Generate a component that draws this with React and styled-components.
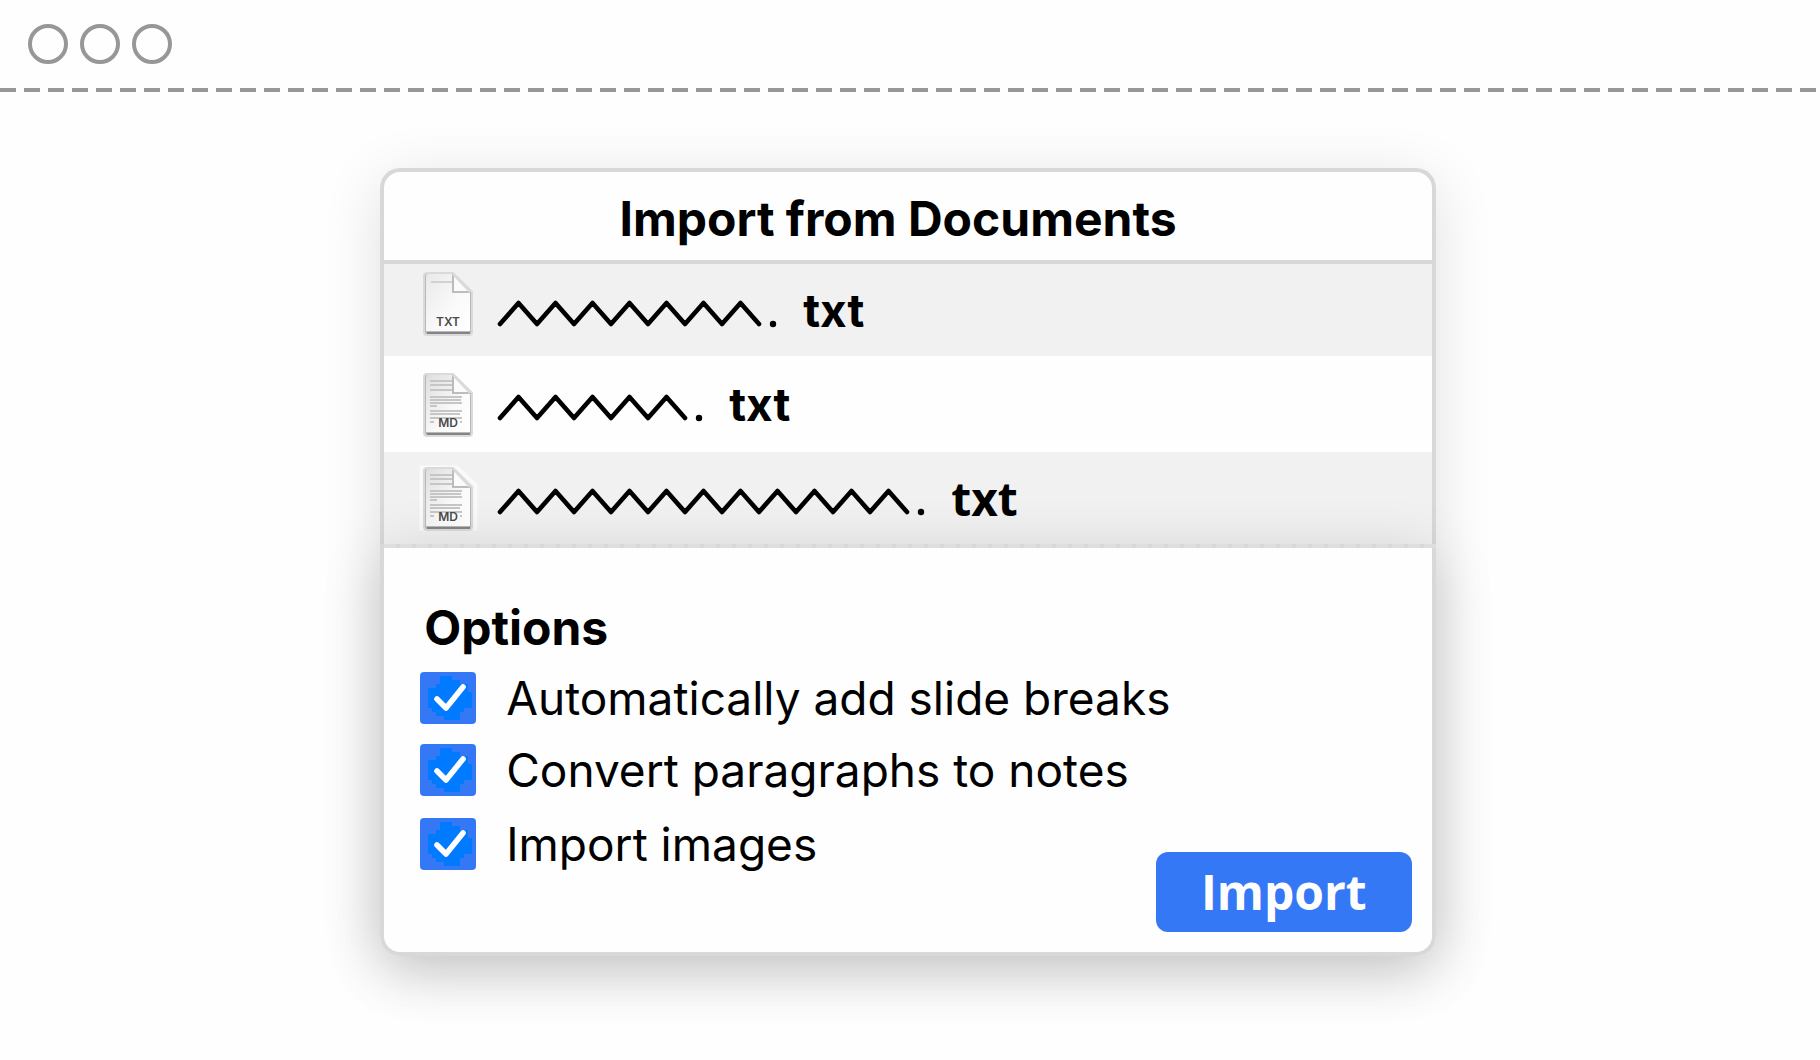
import React, { useState } from "react"
import styled, { createGlobalStyle } from "styled-components"

const GlobalStyle = createGlobalStyle`
  * {
    box-sizing: border-box;
  }
  body {
    margin: 0;
    background: #fefefe;
    color: #000;
    font-family: Inter, "Noto Sans", sans-serif;
    font-size: 46px;
  }
`

const TitleBar = styled.header`
  display: flex;
  align-items: center;
  gap: 12px;
  height: 88px;
  padding: 0 28px;
`
const WindowDot = styled.span`
  width: 40px;
  height: 40px;
  border: 4px solid #979797;
  border-radius: 50%;
`
const DashedLine = styled.div`
  height: 4px;
  background: repeating-linear-gradient(
    90deg,
    ${p => p.color} 0 ${p => p.dash}px,
    ${p => p.gap} ${p => p.dash}px ${p => p.period}px
  );
`

const Main = styled.main`
  display: flex;
  justify-content: center;
  padding: 76px 4px 104px 0;
`
const Dialog = styled.section`
  width: 58vw;
  min-width: 1000px;
  border-radius: 20px;
  background: #fefefe;
  box-shadow: 0 12px 60px rgba(0, 0, 0, 0.12);
`
const Upper = styled.div`
  border: 4px solid #d8d8d8;
  border-bottom: 0;
  border-radius: 20px 20px 0 0;
  overflow: hidden;
`
const Title = styled.h1`
  margin: 0;
  padding: 6px 20px 0 0;
  border-bottom: 4px solid #d8d8d8;
  font-size: 48px;
  font-weight: 700;
  line-height: 82px;
  text-align: center;
`
const FileList = styled.ul`
  margin: 0;
  padding: 0;
  list-style: none;
`
const FileRow = styled.li`
  display: flex;
  align-items: center;
  height: 92px;
  padding: 0 36px;
  background: #f1f1f1;

  &:nth-child(even) {
    height: 96px;
    background: #fefefe;
  }
`
const FileName = styled.span`
  display: flex;
  align-items: center;
  gap: 26px;
  margin-left: 16px;
`
const Extension = styled.strong`
  font-family: ${p => (p.$wide ? '"Open Sans", sans-serif' : "inherit")};
  font-weight: 700;
  line-height: 56px;
`

const Sheet = styled.div`
  position: relative;
  border-radius: 0 0 20px 20px;
  background: #fefefe;
  box-shadow: 0 12px 60px rgba(0, 0, 0, 0.16);
`
const SheetBody = styled.form`
  display: flex;
  justify-content: space-between;
  align-items: flex-end;
  padding: 52px 20px 20px 36px;
  border: 4px solid #d8d8d8;
  border-top: 0;
  border-radius: 0 0 20px 20px;
`
const Options = styled.fieldset`
  flex: 1;
  min-width: 0;
  margin: 0;
  padding: 0 0 50px;
  border: 0;
`
const Legend = styled.legend`
  padding: 0 4px 6px;
  font-size: 48px;
  font-weight: 700;
  line-height: 56px;
`
const Option = styled.label`
  display: flex;
  align-items: center;
  gap: 30px;
  height: 72px;
  white-space: nowrap;

  &:last-child {
    height: 76px;
  }
`
const Checkbox = styled.input`
  appearance: none;
  width: 56px;
  height: 52px;
  margin: 0;
  border-radius: 4px;
  background: #3478f6;
`
const CheckWrap = styled.span`
  display: grid;

  > * {
    grid-area: 1 / 1;
  }
  svg {
    pointer-events: none;
  }
`
const ImportButton = styled.button`
  min-width: 256px;
  padding: 0 44px;
  border: 0;
  border-radius: 12px;
  background: #3478f6;
  color: #fefefe;
  font: 700 48px/80px "Open Sans", sans-serif;
`

const IconSvg = styled.svg`
  overflow: visible;
`

const FileIcon = ({ kind, glow }) => (
  <IconSvg width="60" height="68" viewBox={kind === "TXT" ? "1 6 60 68" : "1 -1 60 68"}>
    <defs>
      <linearGradient id={`paper${kind}`} x1="0" y1="0" x2="1" y2="1">
        <stop offset="0" stopColor={kind === "MD" ? "#dedede" : "#e9e9e9"} />
        <stop offset="0.6" stopColor="#fafafa" />
        <stop offset="1" stopColor="#fff" />
      </linearGradient>
    </defs>
    {glow && (
      <path d="M2 2H38L57 20V64H2Z" fill="#f6f6f6" stroke="#fafafa" strokeWidth="3" />
    )}
    <path
      d="M8 3H34L53 22V62Q53 65 50 65H8Q5 65 5 62V6Q5 3 8 3Z"
      fill="#b8b8b8"
      stroke="#dadada"
      strokeWidth="2"
    />
    <path d="M8 62H51V64H8Z" fill="#858585" />
    <path d="M9 4H34L51 22V61H7V6Q7 4 9 4Z" fill={`url(#paper${kind})`} />
    {kind === "TXT" && <path d="M12 12H34" stroke="#d2d2d2" strokeWidth="2" />}
    {kind === "MD" && (
      <path
        d="M11 10H33M11 14H33M11 19H33M11 26H43M11 29H42M11 32H43M11 35H18M11 40H43M11 43H41M11 47H43M11 51H15M41 51H43"
        stroke="#c6c6c6"
        strokeWidth="2"
      />
    )}
    <path d="M34 4V22H51Z" fill="#fbfbfb" />
    <path d="M34 4V22H51" fill="none" stroke="#bcbcbc" strokeWidth="2" />
    <path d="M34 4L51 22" stroke="#dadada" strokeWidth="2" />
    <text
      x="29"
      y="56"
      textAnchor="middle"
      fontFamily="Inter, sans-serif"
      fontSize="12"
      fontWeight="600"
      fill="#4a4a4a"
    >
      {kind}
    </text>
  </IconSvg>
)

// hand drawn placeholder for a file name, ends with the dot before the extension
const Scribble = ({ peaks }) => {
  const width = peaks * 37 + 22
  const points = ["4,34"]
  for (let i = 0; i < peaks; i++) {
    points.push(`${i * 37 + 22.5},13`)
    points.push(`${i * 37 + 41},34`)
  }
  return (
    <svg width={width} height="40" viewBox={`0 0 ${width} 40`}>
      <polyline
        points={points.join(" ")}
        fill="none"
        stroke="#000"
        strokeWidth="4.6"
        strokeLinecap="round"
        strokeLinejoin="round"
      />
      <circle cx={width - 4} cy="34" r="3.2" />
    </svg>
  )
}

const Tick = () => (
  <svg width="56" height="52" viewBox="0 0 56 52">
    <path
      d="M20 4H32V8H40V12H48V20H52V36H44V40H40V48H24V44H16V40H12V36H8V16H16V12H20Z"
      fill="#007aff"
    />
    <path
      d="M17 27L26 36L43 15"
      fill="none"
      stroke="#fff"
      strokeWidth="5.6"
      strokeLinecap="round"
      strokeLinejoin="round"
    />
  </svg>
)

const files = [
  { kind: "TXT", peaks: 7 },
  { kind: "MD", peaks: 5 },
  { kind: "MD", peaks: 11, last: true },
]
const labels = [
  "Automatically add slide breaks",
  "Convert paragraphs to notes",
  "Import images",
]

export default () => {
  const [checked, setChecked] = useState([true, true, true])

  const toggle = index =>
    setChecked(checked.map((value, i) => (i === index ? !value : value)))

  return (
    <>
      <GlobalStyle />
      <TitleBar>
        <WindowDot />
        <WindowDot />
        <WindowDot />
      </TitleBar>
      <DashedLine color="#979797" gap="transparent" dash={16} period={24} />
      <Main>
        <Dialog>
          <Upper>
            <Title>Import from Documents</Title>
            <FileList>
              {files.map(({ kind, peaks, last }) => (
                <FileRow key={peaks}>
                  <FileIcon kind={kind} glow={last} />
                  <FileName>
                    <Scribble peaks={peaks} />
                    <Extension $wide={last}>txt</Extension>
                  </FileName>
                </FileRow>
              ))}
            </FileList>
          </Upper>
          <Sheet>
            <DashedLine color="#d8d8d8" gap="#dedede" dash={4} period={16} />
            <SheetBody onSubmit={e => e.preventDefault()}>
              <Options>
                <Legend>Options</Legend>
                {labels.map((label, i) => (
                  <Option key={label}>
                    <CheckWrap>
                      <Checkbox
                        type="checkbox"
                        checked={checked[i]}
                        onChange={() => toggle(i)}
                      />
                      {checked[i] && <Tick />}
                    </CheckWrap>
                    {label}
                  </Option>
                ))}
              </Options>
              <ImportButton type="submit">Import</ImportButton>
            </SheetBody>
          </Sheet>
        </Dialog>
      </Main>
    </>
  )
}
